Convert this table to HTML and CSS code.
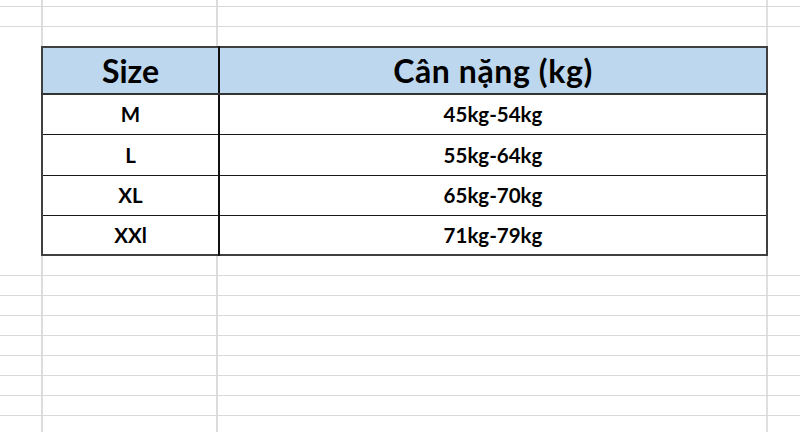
FILE: index.html
```html
<!DOCTYPE html>
<html lang="vi">
<head>
<meta charset="utf-8">
<title>Bảng size</title>
<link rel="stylesheet" href="styles.css">
</head>
<body>
<div class="sheet">
  <div class="grid-top"></div>
  <table class="size-table">
    <thead>
      <tr class="head-row">
        <th class="col-size">Size</th>
        <th class="col-weight">Cân nặng (kg)</th>
      </tr>
    </thead>
    <tbody>
      <tr class="r1"><td>M</td><td>45kg-54kg</td></tr>
      <tr class="r2"><td>L</td><td>55kg-64kg</td></tr>
      <tr class="r3"><td>XL</td><td>65kg-70kg</td></tr>
      <tr class="r4"><td>XXl</td><td>71kg-79kg</td></tr>
    </tbody>
  </table>
  <div class="grid-bottom"></div>
</div>
</body>
</html>
```

FILE: styles.css
```css
html, body {
  margin: 0;
  padding: 0;
}

body {
  width: 800px;
  height: 432px;
  overflow: hidden;
  background-color: #ffffff;
  background-image:
    linear-gradient(to right,
      transparent 41px, #dcdcdc 41px, #dcdcdc 43px, transparent 43px,
      transparent 216px, #dcdcdc 216px, #dcdcdc 218px, transparent 218px,
      transparent 766px, #e0e0e0 766px, #e0e0e0 768px, transparent 768px);
  font-family: Lato, "Liberation Sans", "Noto Sans", sans-serif;
  color: #000;
}

.sheet {
  display: flex;
  flex-direction: column;
}

.grid-top {
  height: 46px;
  background-image: repeating-linear-gradient(to bottom,
    transparent 0, transparent 6px, #d9d9d9 6px, #d9d9d9 7px, transparent 7px, transparent 20px);
}

.grid-bottom {
  height: 176px;
  background-image: repeating-linear-gradient(to bottom,
    transparent 0, transparent 19px, #d9d9d9 19px, #d9d9d9 20px);
}

.size-table {
  margin-left: 41px;
  width: 727px;
  border-collapse: collapse;
  border: 2px solid #404040;
  background: #fff;
  table-layout: fixed;
}

.size-table th,
.size-table td {
  padding: 0;
  text-align: center;
  vertical-align: middle;
  font-weight: 700;
  border: 1px solid #1a1a1a;
}

.size-table .col-size {
  width: 175px;
  border-right: 2px solid #111;
}

.size-table td:first-child {
  border-right: 2px solid #111;
}

.head-row {
  height: 47px;
  background: #bdd7ee;
}

.head-row th {
  font-size: 32px;
  border-bottom: 2px solid #333;
}

.head-row .col-weight {
  letter-spacing: 0.6px;
}

.size-table td {
  font-size: 20.5px;
}

.r1 { height: 40px; }
.r2 { height: 41px; }
.r3 { height: 40px; }
.r4 { height: 40px; }
```
